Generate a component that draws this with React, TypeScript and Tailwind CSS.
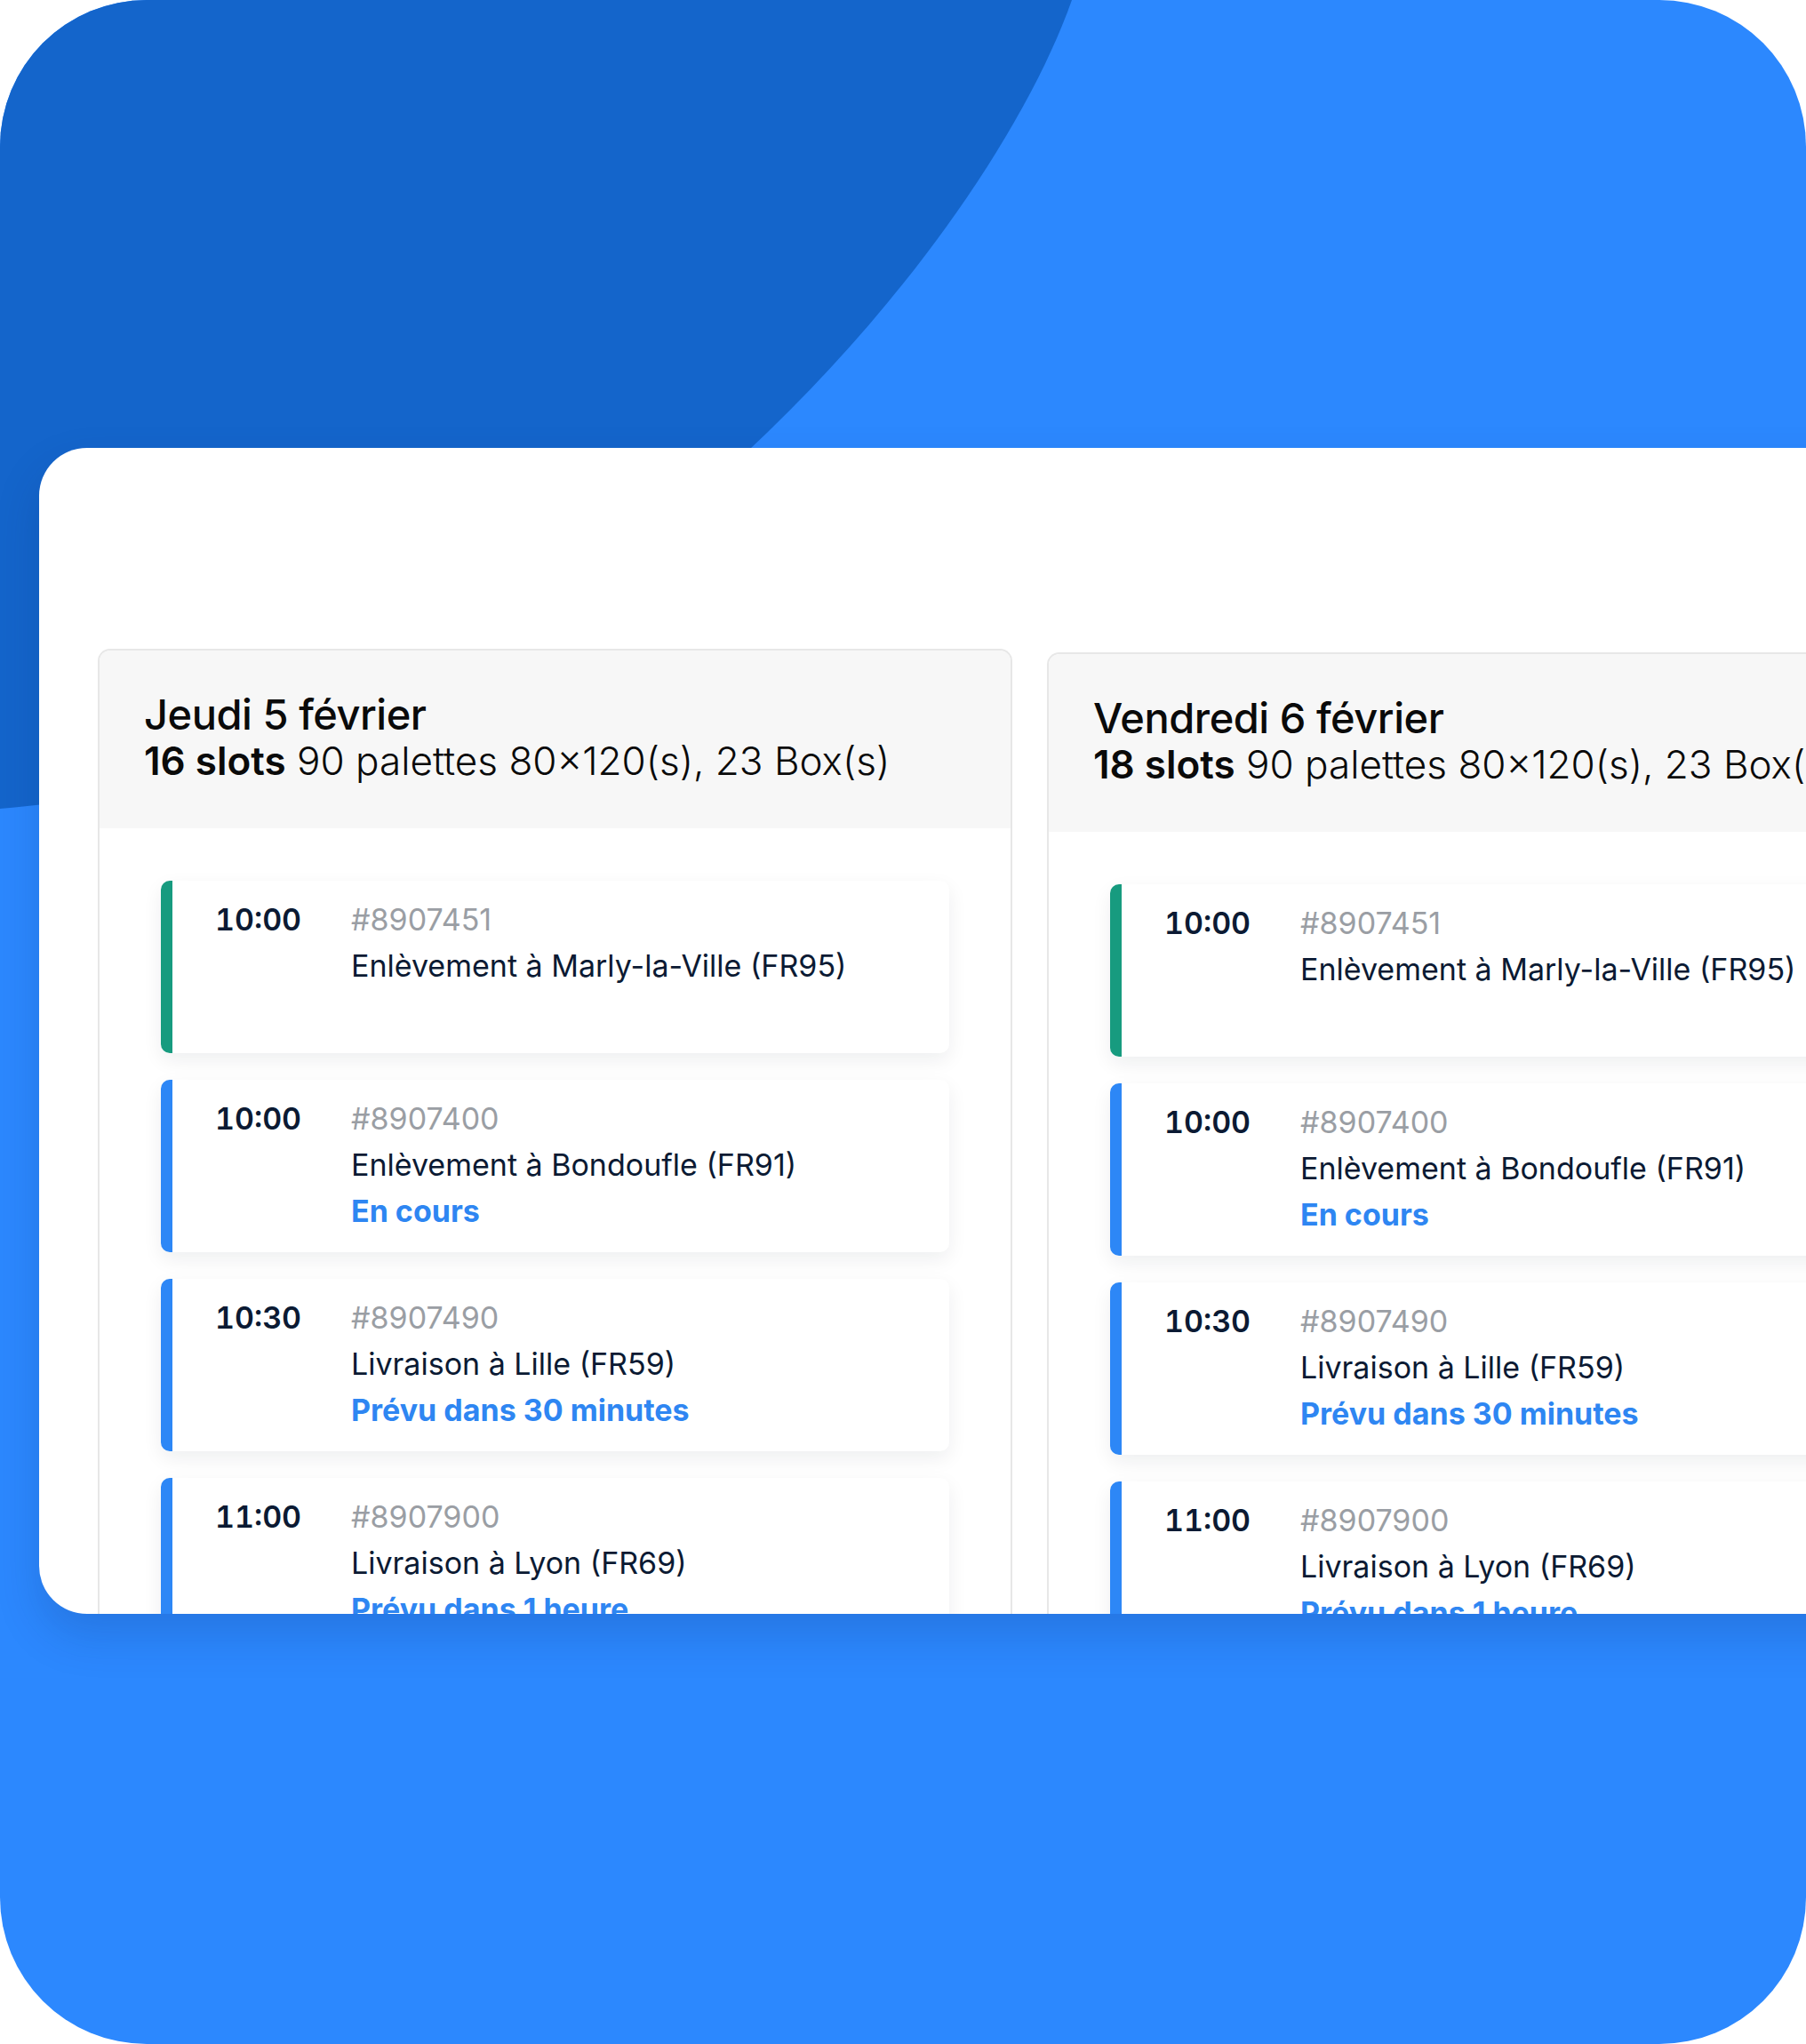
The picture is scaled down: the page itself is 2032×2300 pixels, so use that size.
import React from 'react'

type Slot = {
  time: string
  ref: string
  label: string
  status?: string
  accent: 'green' | 'blue'
}

type Day = {
  title: string
  slots: string
  summary: string
  items: Slot[]
}

const items: Slot[] = [
  { time: '10:00', ref: '#8907451', label: 'Enlèvement à Marly-la-Ville (FR95)', accent: 'green' },
  { time: '10:00', ref: '#8907400', label: 'Enlèvement à Bondoufle (FR91)', status: 'En cours', accent: 'blue' },
  { time: '10:30', ref: '#8907490', label: 'Livraison à Lille (FR59)', status: 'Prévu dans 30 minutes', accent: 'blue' },
  { time: '11:00', ref: '#8907900', label: 'Livraison à Lyon (FR69)', status: 'Prévu dans 1 heure', accent: 'blue' },
]

const days: Day[] = [
  { title: 'Jeudi 5 février', slots: '16 slots', summary: '90 palettes 80×120(s), 23 Box(s)', items },
  { title: 'Vendredi 6 février', slots: '18 slots', summary: '90 palettes 80×120(s), 23 Box(s)', items },
]

function SlotCard({ slot }: { slot: Slot }) {
  return (
    <div className="flex h-[194px] shrink-0 overflow-hidden rounded-[10px] bg-white shadow-[0_8px_22px_rgba(15,23,42,0.07)]">
      <div className={`w-[13px] shrink-0 ${slot.accent === 'green' ? 'bg-[#179B7F]' : 'bg-[#2D87F6]'}`} />
      <div className="flex pl-[48px] pt-[18px] text-[34px] leading-[52px]">
        <div className="w-[153px] shrink-0 font-semibold tabular-nums text-[#0B1A33]">{slot.time}</div>
        <div className="flex flex-col whitespace-nowrap">
          <span className="text-[#9A9EA4]">{slot.ref}</span>
          <span className="text-[#0B1A33]">{slot.label}</span>
          {slot.status && <span className="font-bold text-[#2E86F2]">{slot.status}</span>}
        </div>
      </div>
    </div>
  )
}

function DayColumn({ day, offset }: { day: Day; offset?: boolean }) {
  return (
    <div
      className={`flex w-[1029px] shrink-0 flex-col overflow-hidden rounded-t-[14px] border-2 border-b-0 border-[#E7E7E7] ${
        offset ? 'mt-[4px]' : ''
      }`}
    >
      <div className="h-[200px] shrink-0 whitespace-nowrap bg-[#F7F7F7] pl-[50px] pt-[46px] text-[#0A0A0A]">
        <div className="text-[47px] font-medium leading-[52px] tracking-[-0.01em]">{day.title}</div>
        <div className="text-[44px] leading-[52px]">
          <span className="font-semibold">{day.slots}</span> <span className="font-light">{day.summary}</span>
        </div>
      </div>
      <div className="flex flex-col gap-[30px] bg-white px-[69px] pt-[59px]">
        {day.items.map((s) => (
          <SlotCard key={s.ref} slot={s} />
        ))}
      </div>
    </div>
  )
}

export default function App() {
  return (
    <div className="h-[2300px] w-[2032px] bg-white font-['Inter',_'Noto_Sans',_sans-serif]">
      <div className="relative h-full w-full overflow-hidden rounded-[165px] bg-[#2C88FE]">
        {/* dark swoosh in the upper left */}
        <svg className="absolute inset-0" width="2032" height="2300" viewBox="0 0 2032 2300">
          <path d="M0 0 H1206 C1100 300 620 860 0 910 Z" fill="#1465CB" />
        </svg>
        <div className="relative pl-[44px] pt-[504px]">
          <div className="flex h-[1312px] w-[2200px] gap-[39px] overflow-hidden rounded-[54px] bg-white pl-[66px] pt-[226px] shadow-[0_24px_50px_rgba(10,40,100,0.18)]">
            {days.map((d, i) => (
              <DayColumn key={d.title} day={d} offset={i === 1} />
            ))}
          </div>
        </div>
      </div>
    </div>
  )
}
